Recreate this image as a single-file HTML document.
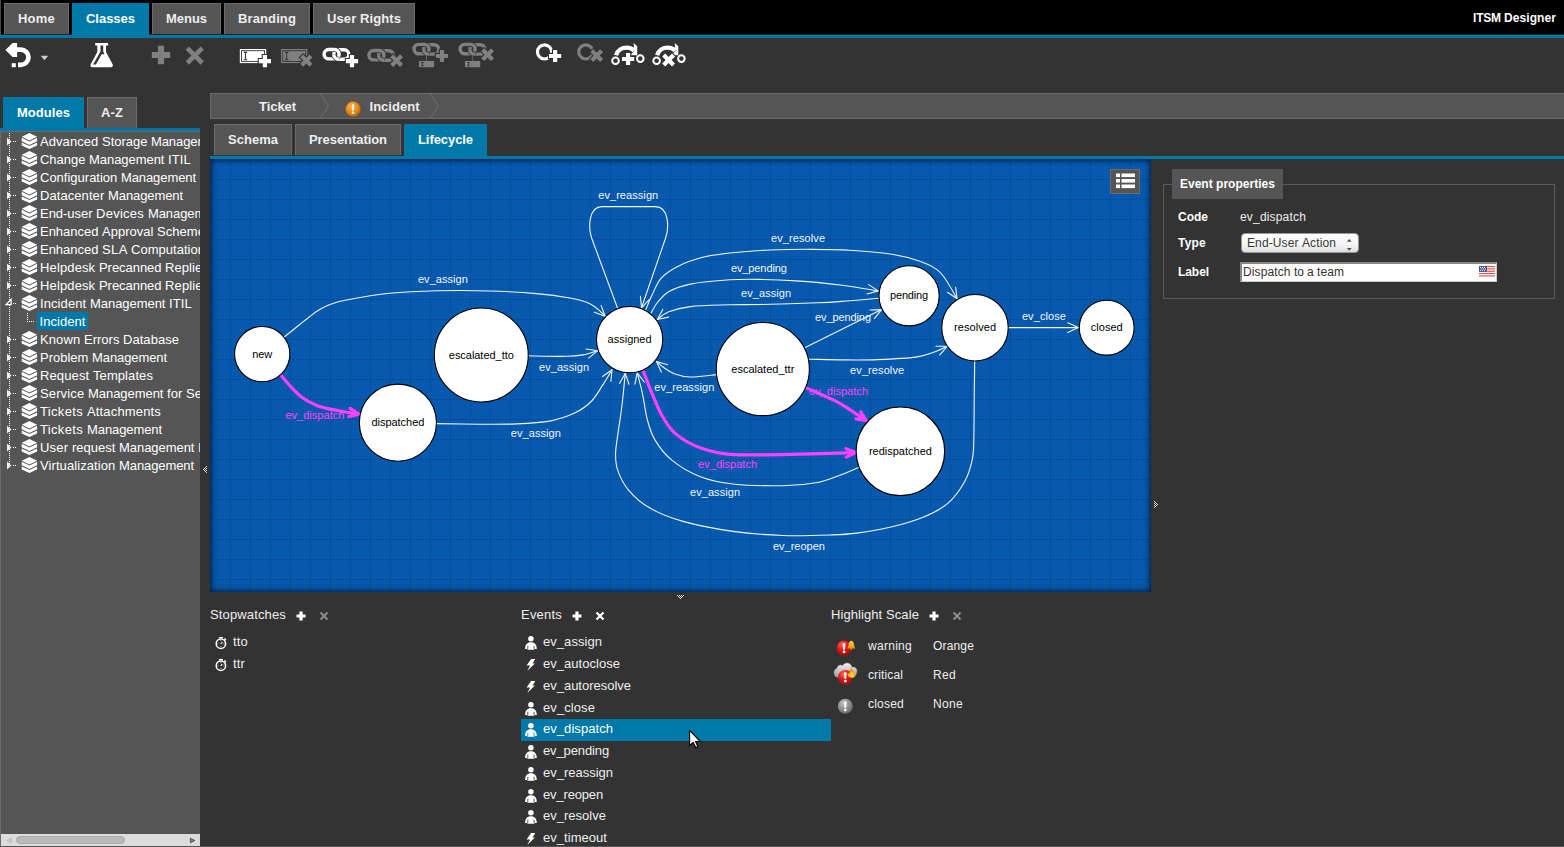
<!DOCTYPE html>
<html lang="en">
<head>
<meta charset="utf-8">
<title>ITSM Designer</title>
<style>
*{box-sizing:border-box}
html,body{margin:0;padding:0}
body{width:1564px;height:847px;overflow:hidden;background:#333;color:#fff;font-family:"Liberation Sans",Arial,Helvetica,sans-serif;font-size:13px;position:relative}
.abs{position:absolute}
#topbar{position:absolute;left:0;top:0;width:1564px;height:35px;background:#000}
#topline{position:absolute;left:0;top:35px;width:1564px;height:3px;background:#0079a8}
.tab{position:absolute;height:31px;top:3px;background:#555;border:1px solid #6b6b6b;border-bottom:0;color:#eee;font-weight:bold;font-size:13px;line-height:29px;text-align:center;white-space:nowrap}
.tab.on{background:#0079a8;border-color:#0079a8;color:#fff;height:32px}
#appname{position:absolute;right:8px;top:3px;height:31px;line-height:30px;font-weight:bold;font-size:12px;color:#fff;white-space:nowrap}
#edge{position:absolute;left:0;top:0;width:1px;height:35px;background:#4a4a4a}
/* left */
#lefttabsline{position:absolute;left:0;top:128px;width:200px;height:3px;background:#0079a8}
#tree{position:absolute;left:0;top:131px;width:200px;height:716px;background:#555;border:1px solid #6b6b6b;border-right:0;overflow:hidden}
.trow{position:absolute;left:0;height:18px;width:300px;white-space:nowrap;font-size:13px;line-height:18px;color:#fff}
.trow .lbl{position:absolute;left:39px;top:0}
.trow svg{position:absolute}
#hscroll{position:absolute;left:0;bottom:0;width:199px;height:12px;background:#dcdcdc}
#hthumb{position:absolute;left:15px;top:2px;width:109px;height:8px;border-radius:4px;background:#b9b9b9;border:1px solid #aaa}
/* main */
#crumbs{position:absolute;left:210px;top:93px;width:1354px;height:26px;background:#555;border:1px solid #6b6b6b;border-right:0}
.crumb{position:absolute;top:0;height:24px;line-height:24px;font-weight:bold;font-size:13px;color:#eee;white-space:nowrap}
#subline{position:absolute;left:210px;top:156px;width:1354px;height:3px;background:#0079a8}
.stab{position:absolute;top:124px;height:31px;background:#555;border:1px solid #6b6b6b;border-bottom:0;color:#eee;font-weight:bold;font-size:13px;line-height:29px;text-align:center;white-space:nowrap}
.stab.on{background:#0079a8;border-color:#0079a8;color:#fff;height:32px}
#canvas{position:absolute;left:210px;top:159px;width:941px;height:433px;background:#0659ae repeating-linear-gradient(to bottom,rgba(255,255,255,.012) 0,rgba(255,255,255,.012) 1px,rgba(0,0,30,.02) 1px,rgba(0,0,30,.02) 2px);overflow:hidden}
#canvas svg{position:absolute;left:0;top:0}
#cshadow{position:absolute;left:0;top:0;width:941px;height:433px;box-shadow:inset 0 0 6px 1px rgba(0,10,40,.85);pointer-events:none}
#listbtn{position:absolute;left:900px;top:10px;width:30px;height:25px;background:#555;border:1px solid #6b6b6b}
/* right */
#fs{position:absolute;left:1163px;top:184px;width:392px;height:115px;border:1px solid #5c5c5c}
#legend{position:absolute;left:1172px;top:169px;width:111px;height:30px;background:#555;font-weight:bold;font-size:12px;line-height:31px;padding-left:8px;white-space:nowrap}
.plabel{position:absolute;left:1178px;font-weight:bold;font-size:12px;line-height:14px;white-space:nowrap}
.pval{position:absolute;left:1240px;font-size:12px;line-height:14px;white-space:nowrap;color:#eee}
#sel{position:absolute;left:1241px;top:233px;width:118px;height:20px;border:1px solid #999;border-radius:4px;background:linear-gradient(#fefefe,#f4f4f4 60%,#dedede);color:#383838;font-size:12px;line-height:18px;padding-left:5px;white-space:nowrap}
#inp{position:absolute;left:1240px;top:262px;width:257px;height:20px;background:#fff;border:2px solid #888;border-right:1px solid #ccc;border-bottom:1px solid #ccc;color:#3a3030;font-size:12px;line-height:17px;padding-left:1px;white-space:nowrap}
/* bottom */
.ltitle{position:absolute;top:607px;font-size:13px;line-height:16px;color:#eee;white-space:nowrap}
.lrow{position:absolute;height:22px;font-size:13px;line-height:20px;color:#eee;white-space:nowrap}
.lrow.on{background:#0079a8;color:#fff}
.lrow>span{position:absolute;left:22px;top:0}
.lrow svg{position:absolute}
.hrow{position:absolute;font-size:12px;line-height:14px;color:#eee;white-space:nowrap}
svg{overflow:visible}
</style>
</head>
<body>
<div id="topbar"></div><div class="abs" style="left:0;top:34px;width:1564px;height:1px;background:#2b2422"></div><div id="topline"></div><div id="edge"></div>
<div class="tab" style="left:4px;width:65px"><span style="letter-spacing:0.219px">Home</span></div>
<div class="tab on" style="left:72px;width:77px"><span style="letter-spacing:-0.022px">Classes</span></div>
<div class="tab" style="left:152px;width:69px"><span style="letter-spacing:-0.034px">Menus</span></div>
<div class="tab" style="left:224px;width:86px"><span style="letter-spacing:0.117px">Branding</span></div>
<div class="tab" style="left:313px;width:102px"><span style="letter-spacing:0.094px">User </span><span style="letter-spacing:0.091px">Rights</span></div>
<div id="appname"><span style="letter-spacing:-0.200px">ITSM </span><span style="letter-spacing:0.080px">Designer</span></div>
<svg class="abs" width="720" height="93" style="left:0;top:0" viewBox="0 0 720 93"><path d="M16.6 49.6H20.9A7.6 7.6 0 0 1 20.9 64.8H18" fill="none" stroke="#fff" stroke-width="4.7"/><path d="M5.4 50L12.6 42.9H17.1V57.1H12.6Z" fill="#fff"/><rect x="11.7" y="63.2" width="4.1" height="4" fill="#fff"/><path d="M40.7 55.8H48.2L44.45 60.2Z" fill="#ccc"/><path d="M95.2 42.9H108.1V45.4H106V52L112.6 64.2Q113.6 67.2 110.8 67.2H92.5Q89.7 67.2 90.7 64.2L97.3 52V45.4H95.2Z" fill="#fff"/><path d="M100.5 45.4H103.2V51.6L104.6 54.2H101.6L96 64.6H93.1L100.5 51.4Z" fill="#333"/><path d="M157.90 45.80H164.10V51.90H170.20V58.10H164.10V64.20H157.90V58.10H151.80V51.90H157.90Z" fill="#808080"/><path d="M187.3 48.1L202.2 63M202.2 48.1L187.3 63" stroke="#808080" stroke-width="4.6" fill="none"/><rect x="239.8" y="49" width="26.4" height="14.1" fill="#fff"/><rect x="241.5" y="50.7" width="23" height="10.7" fill="none" stroke="#333" stroke-width="0.9"/><path d="M243.80 52.40h3.4M243.80 59.80h3.4M245.50 52.40v7.4" stroke="#333" stroke-width="1.1" fill="none"/><path d="M262.80 55.00H267.00V59.00H271.00V63.20H267.00V67.20H262.80V63.20H258.80V59.00H262.80Z" fill="#333" stroke="#333" stroke-width="2.2" stroke-linejoin="miter"/><path d="M262.80 55.00H267.00V59.00H271.00V63.20H267.00V67.20H262.80V63.20H258.80V59.00H262.80Z" fill="#fff"/><rect x="281" y="49" width="26.4" height="14.1" fill="#808080"/><rect x="282.7" y="50.7" width="23" height="10.7" fill="none" stroke="#333" stroke-width="0.9"/><path d="M285.00 52.40h3.4M285.00 59.80h3.4M286.70 52.40v7.4" stroke="#333" stroke-width="1.1" fill="none"/><path d="M-2.10 -6.61H2.10V-2.10H6.61V2.10H2.10V6.61H-2.10V2.10H-6.61V-2.10H-2.10Z" transform="translate(306.30 60.60) rotate(45)" fill="#333" stroke="#333" stroke-width="2.2"/><path d="M-2.10 -6.61H2.10V-2.10H6.61V2.10H2.10V6.61H-2.10V2.10H-6.61V-2.10H-2.10Z" transform="translate(306.30 60.60) rotate(45)" fill="#808080"/><rect x="333.80" y="49.80" width="15" height="9.4" rx="4.7" fill="none" stroke="#fff" stroke-width="3.4"/><rect x="324.10" y="49.50" width="15" height="9.4" rx="4.7" fill="none" stroke="#333" stroke-width="5.0"/><rect x="324.10" y="49.50" width="15" height="9.4" rx="4.7" fill="none" stroke="#fff" stroke-width="3.4"/><clipPath id="ck1"><rect x="330.40" y="54.80" width="9" height="8"/></clipPath><g clip-path="url(#ck1)"><rect x="333.80" y="49.80" width="15" height="9.4" rx="4.7" fill="none" stroke="#333" stroke-width="5.0"/><rect x="333.80" y="49.80" width="15" height="9.4" rx="4.7" fill="none" stroke="#fff" stroke-width="3.4"/></g><path d="M349.90 55.00H354.10V59.00H358.10V63.20H354.10V67.20H349.90V63.20H345.90V59.00H349.90Z" fill="#333" stroke="#333" stroke-width="2.2" stroke-linejoin="miter"/><path d="M349.90 55.00H354.10V59.00H358.10V63.20H354.10V67.20H349.90V63.20H345.90V59.00H349.90Z" fill="#fff"/><rect x="378.60" y="50.80" width="15" height="9.4" rx="4.7" fill="none" stroke="#808080" stroke-width="3.4"/><rect x="368.90" y="50.50" width="15" height="9.4" rx="4.7" fill="none" stroke="#333" stroke-width="5.0"/><rect x="368.90" y="50.50" width="15" height="9.4" rx="4.7" fill="none" stroke="#808080" stroke-width="3.4"/><clipPath id="ck2"><rect x="375.20" y="55.80" width="9" height="8"/></clipPath><g clip-path="url(#ck2)"><rect x="378.60" y="50.80" width="15" height="9.4" rx="4.7" fill="none" stroke="#333" stroke-width="5.0"/><rect x="378.60" y="50.80" width="15" height="9.4" rx="4.7" fill="none" stroke="#808080" stroke-width="3.4"/></g><path d="M-2.10 -6.96H2.10V-2.10H6.96V2.10H2.10V6.96H-2.10V2.10H-6.96V-2.10H-2.10Z" transform="translate(396.60 60.60) rotate(45)" fill="#333" stroke="#333" stroke-width="2.2"/><path d="M-2.10 -6.96H2.10V-2.10H6.96V2.10H2.10V6.96H-2.10V2.10H-6.96V-2.10H-2.10Z" transform="translate(396.60 60.60) rotate(45)" fill="#808080"/><rect x="423.70" y="44.70" width="15" height="9.4" rx="4.7" fill="none" stroke="#808080" stroke-width="3.4"/><rect x="414.00" y="44.40" width="15" height="9.4" rx="4.7" fill="none" stroke="#333" stroke-width="5.0"/><rect x="414.00" y="44.40" width="15" height="9.4" rx="4.7" fill="none" stroke="#808080" stroke-width="3.4"/><clipPath id="ck3"><rect x="420.30" y="49.70" width="9" height="8"/></clipPath><g clip-path="url(#ck3)"><rect x="423.70" y="44.70" width="15" height="9.4" rx="4.7" fill="none" stroke="#333" stroke-width="5.0"/><rect x="423.70" y="44.70" width="15" height="9.4" rx="4.7" fill="none" stroke="#808080" stroke-width="3.4"/></g><path d="M439.90 49.90H444.10V53.90H448.10V58.10H444.10V62.10H439.90V58.10H435.90V53.90H439.90Z" fill="#333" stroke="#333" stroke-width="2.2" stroke-linejoin="miter"/><path d="M439.90 49.90H444.10V53.90H448.10V58.10H444.10V62.10H439.90V58.10H435.90V53.90H439.90Z" fill="#808080"/><path d="M426.5 56.5V61" stroke="#808080" stroke-width="1" stroke-dasharray="1.5 1" fill="none"/><rect x="418.9" y="61" width="15.2" height="6.2" fill="#808080"/><path d="M421.00 62.50h2.8M421.00 65.70h2.8M422.40 62.50v3.2" stroke="#333" stroke-width="0.9" fill="none"/><rect x="469.80" y="44.70" width="15" height="9.4" rx="4.7" fill="none" stroke="#808080" stroke-width="3.4"/><rect x="460.10" y="44.40" width="15" height="9.4" rx="4.7" fill="none" stroke="#333" stroke-width="5.0"/><rect x="460.10" y="44.40" width="15" height="9.4" rx="4.7" fill="none" stroke="#808080" stroke-width="3.4"/><clipPath id="ck4"><rect x="466.40" y="49.70" width="9" height="8"/></clipPath><g clip-path="url(#ck4)"><rect x="469.80" y="44.70" width="15" height="9.4" rx="4.7" fill="none" stroke="#333" stroke-width="5.0"/><rect x="469.80" y="44.70" width="15" height="9.4" rx="4.7" fill="none" stroke="#808080" stroke-width="3.4"/></g><path d="M-2.10 -6.96H2.10V-2.10H6.96V2.10H2.10V6.96H-2.10V2.10H-6.96V-2.10H-2.10Z" transform="translate(487.60 54.70) rotate(45)" fill="#333" stroke="#333" stroke-width="2.2"/><path d="M-2.10 -6.96H2.10V-2.10H6.96V2.10H2.10V6.96H-2.10V2.10H-6.96V-2.10H-2.10Z" transform="translate(487.60 54.70) rotate(45)" fill="#808080"/><path d="M472.6 56.5V61" stroke="#808080" stroke-width="1" stroke-dasharray="1.5 1" fill="none"/><rect x="465" y="61" width="15.2" height="6.2" fill="#808080"/><path d="M467.10 62.50h2.8M467.10 65.70h2.8M468.50 62.50v3.2" stroke="#333" stroke-width="0.9" fill="none"/><circle cx="544.5" cy="51.9" r="7.05" fill="none" stroke="#fff" stroke-width="3.1"/><path d="M553.00 49.90H557.20V53.90H561.20V58.10H557.20V62.10H553.00V58.10H549.00V53.90H553.00Z" fill="#333" stroke="#333" stroke-width="2.2" stroke-linejoin="miter"/><path d="M553.00 49.90H557.20V53.90H561.20V58.10H557.20V62.10H553.00V58.10H549.00V53.90H553.00Z" fill="#fff"/><circle cx="585.8" cy="51.9" r="7.05" fill="none" stroke="#808080" stroke-width="3.1"/><path d="M-2.10 -6.96H2.10V-2.10H6.96V2.10H2.10V6.96H-2.10V2.10H-6.96V-2.10H-2.10Z" transform="translate(596.70 55.60) rotate(45)" fill="#333" stroke="#333" stroke-width="2.2"/><path d="M-2.10 -6.96H2.10V-2.10H6.96V2.10H2.10V6.96H-2.10V2.10H-6.96V-2.10H-2.10Z" transform="translate(596.70 55.60) rotate(45)" fill="#808080"/><path d="M616.10 55.2 C617.40 50.2 622.20 47.6 626.70 47.6 C629.70 47.6 632.20 48.6 634.20 50.6" fill="none" stroke="#fff" stroke-width="4.4"/><path d="M633.60 43 L637.20 46.2 V55.2 H630.00 L634.40 51 Z" fill="#fff"/><circle cx="615.50" cy="60.8" r="3.3" fill="none" stroke="#fff" stroke-width="2"/><circle cx="640.30" cy="58.6" r="3.3" fill="none" stroke="#fff" stroke-width="2"/><path d="M626.00 52.90H630.20V56.90H634.20V61.10H630.20V65.10H626.00V61.10H622.00V56.90H626.00Z" fill="#333" stroke="#333" stroke-width="2.2" stroke-linejoin="miter"/><path d="M626.00 52.90H630.20V56.90H634.20V61.10H630.20V65.10H626.00V61.10H622.00V56.90H626.00Z" fill="#fff"/><path d="M657.20 55.2 C658.50 50.2 663.30 47.6 667.80 47.6 C670.80 47.6 673.30 48.6 675.30 50.6" fill="none" stroke="#fff" stroke-width="4.4"/><path d="M674.70 43 L678.30 46.2 V55.2 H671.10 L675.50 51 Z" fill="#fff"/><circle cx="656.60" cy="60.8" r="3.3" fill="none" stroke="#fff" stroke-width="2"/><circle cx="681.40" cy="58.6" r="3.3" fill="none" stroke="#fff" stroke-width="2"/><path d="M-2.10 -6.96H2.10V-2.10H6.96V2.10H2.10V6.96H-2.10V2.10H-6.96V-2.10H-2.10Z" transform="translate(668.60 60.00) rotate(45)" fill="#333" stroke="#333" stroke-width="2.2"/><path d="M-2.10 -6.96H2.10V-2.10H6.96V2.10H2.10V6.96H-2.10V2.10H-6.96V-2.10H-2.10Z" transform="translate(668.60 60.00) rotate(45)" fill="#fff"/></svg>
<div class="tab on" style="left:3px;top:97px;width:81px;height:32px;line-height:30px"><span style="letter-spacing:0.038px">Modules</span></div>
<div class="tab" style="left:87px;top:97px;width:50px;height:31px;line-height:30px"><span style="letter-spacing:0.109px">A-Z</span></div>
<div id="lefttabsline"></div>
<div id="tree"><svg width="200" height="716" style="position:absolute;left:0;top:0"><g stroke="#fff" stroke-width="1" fill="none" shape-rendering="crispEdges"><path d="M8.5 1 V334" stroke-dasharray="1 1"/><path d="M26.5 181 V190" stroke-dasharray="1 1"/><path d="M28 189.5 H33" stroke-dasharray="1 1"/><path d="M12 9.5 H15" stroke-dasharray="1 1"/><path d="M12 27.5 H15" stroke-dasharray="1 1"/><path d="M12 45.5 H15" stroke-dasharray="1 1"/><path d="M12 63.5 H15" stroke-dasharray="1 1"/><path d="M12 81.5 H15" stroke-dasharray="1 1"/><path d="M12 99.5 H15" stroke-dasharray="1 1"/><path d="M12 117.5 H15" stroke-dasharray="1 1"/><path d="M12 135.5 H15" stroke-dasharray="1 1"/><path d="M12 153.5 H15" stroke-dasharray="1 1"/><path d="M12 171.5 H15" stroke-dasharray="1 1"/><path d="M12 207.5 H15" stroke-dasharray="1 1"/><path d="M12 225.5 H15" stroke-dasharray="1 1"/><path d="M12 243.5 H15" stroke-dasharray="1 1"/><path d="M12 261.5 H15" stroke-dasharray="1 1"/><path d="M12 279.5 H15" stroke-dasharray="1 1"/><path d="M12 297.5 H15" stroke-dasharray="1 1"/><path d="M12 315.5 H15" stroke-dasharray="1 1"/><path d="M12 333.5 H15" stroke-dasharray="1 1"/></g><g fill="#eee"><path d="M6 5.5 L10.5 9.5 L6 13.5 Z"/><path d="M6 23.5 L10.5 27.5 L6 31.5 Z"/><path d="M6 41.5 L10.5 45.5 L6 49.5 Z"/><path d="M6 59.5 L10.5 63.5 L6 67.5 Z"/><path d="M6 77.5 L10.5 81.5 L6 85.5 Z"/><path d="M6 95.5 L10.5 99.5 L6 103.5 Z"/><path d="M6 113.5 L10.5 117.5 L6 121.5 Z"/><path d="M6 131.5 L10.5 135.5 L6 139.5 Z"/><path d="M6 149.5 L10.5 153.5 L6 157.5 Z"/><path d="M6 203.5 L10.5 207.5 L6 211.5 Z"/><path d="M6 221.5 L10.5 225.5 L6 229.5 Z"/><path d="M6 239.5 L10.5 243.5 L6 247.5 Z"/><path d="M6 257.5 L10.5 261.5 L6 265.5 Z"/><path d="M6 275.5 L10.5 279.5 L6 283.5 Z"/><path d="M6 293.5 L10.5 297.5 L6 301.5 Z"/><path d="M6 311.5 L10.5 315.5 L6 319.5 Z"/><path d="M6 329.5 L10.5 333.5 L6 337.5 Z"/></g><path d="M5 172.6 L10.1 167.4 V172.6 Z" fill="#555" stroke="#fff" stroke-width="1.3"/></svg><div class="trow" style="top:1px"><svg width="17" height="18" viewBox="0 0 17 18" style="left:20px;top:-1px"><g fill="#fff"><path d="M8.4 1 L16.1 4.7 L8.4 8.4 L0.7 4.7 Z"/><path d="M0.7 5.8 L8.4 9.5 L16.1 5.8 V9.3 L8.4 13 L0.7 9.3 Z"/><path d="M0.7 10.4 L8.4 14.1 L16.1 10.4 V13.4 L8.4 17.1 L0.7 13.4 Z"/></g></svg><span class="lbl"><span style="letter-spacing:0.062px">Advanced </span><span style="letter-spacing:-0.020px">Storage </span><span style="letter-spacing:-0.089px">Management</span></span></div><div class="trow" style="top:19px"><svg width="17" height="18" viewBox="0 0 17 18" style="left:20px;top:-1px"><g fill="#fff"><path d="M8.4 1 L16.1 4.7 L8.4 8.4 L0.7 4.7 Z"/><path d="M0.7 5.8 L8.4 9.5 L16.1 5.8 V9.3 L8.4 13 L0.7 9.3 Z"/><path d="M0.7 10.4 L8.4 14.1 L16.1 10.4 V13.4 L8.4 17.1 L0.7 13.4 Z"/></g></svg><span class="lbl"><span style="letter-spacing:-0.022px">Change </span><span style="letter-spacing:-0.045px">Management </span><span style="letter-spacing:0.148px">ITIL</span></span></div><div class="trow" style="top:37px"><svg width="17" height="18" viewBox="0 0 17 18" style="left:20px;top:-1px"><g fill="#fff"><path d="M8.4 1 L16.1 4.7 L8.4 8.4 L0.7 4.7 Z"/><path d="M0.7 5.8 L8.4 9.5 L16.1 5.8 V9.3 L8.4 13 L0.7 9.3 Z"/><path d="M0.7 10.4 L8.4 14.1 L16.1 10.4 V13.4 L8.4 17.1 L0.7 13.4 Z"/></g></svg><span class="lbl">Configuration <span style="letter-spacing:-0.089px">Management</span></span></div><div class="trow" style="top:55px"><svg width="17" height="18" viewBox="0 0 17 18" style="left:20px;top:-1px"><g fill="#fff"><path d="M8.4 1 L16.1 4.7 L8.4 8.4 L0.7 4.7 Z"/><path d="M0.7 5.8 L8.4 9.5 L16.1 5.8 V9.3 L8.4 13 L0.7 9.3 Z"/><path d="M0.7 10.4 L8.4 14.1 L16.1 10.4 V13.4 L8.4 17.1 L0.7 13.4 Z"/></g></svg><span class="lbl"><span style="letter-spacing:0.072px">Datacenter </span><span style="letter-spacing:-0.089px">Management</span></span></div><div class="trow" style="top:73px"><svg width="17" height="18" viewBox="0 0 17 18" style="left:20px;top:-1px"><g fill="#fff"><path d="M8.4 1 L16.1 4.7 L8.4 8.4 L0.7 4.7 Z"/><path d="M0.7 5.8 L8.4 9.5 L16.1 5.8 V9.3 L8.4 13 L0.7 9.3 Z"/><path d="M0.7 10.4 L8.4 14.1 L16.1 10.4 V13.4 L8.4 17.1 L0.7 13.4 Z"/></g></svg><span class="lbl"><span style="letter-spacing:-0.042px">End-user </span><span style="letter-spacing:0.268px">Devices </span><span style="letter-spacing:-0.089px">Management</span></span></div><div class="trow" style="top:91px"><svg width="17" height="18" viewBox="0 0 17 18" style="left:20px;top:-1px"><g fill="#fff"><path d="M8.4 1 L16.1 4.7 L8.4 8.4 L0.7 4.7 Z"/><path d="M0.7 5.8 L8.4 9.5 L16.1 5.8 V9.3 L8.4 13 L0.7 9.3 Z"/><path d="M0.7 10.4 L8.4 14.1 L16.1 10.4 V13.4 L8.4 17.1 L0.7 13.4 Z"/></g></svg><span class="lbl"><span style="letter-spacing:-0.019px">Enhanced </span><span style="letter-spacing:0.009px">Approval </span><span style="letter-spacing:0.049px">Scheme</span></span></div><div class="trow" style="top:109px"><svg width="17" height="18" viewBox="0 0 17 18" style="left:20px;top:-1px"><g fill="#fff"><path d="M8.4 1 L16.1 4.7 L8.4 8.4 L0.7 4.7 Z"/><path d="M0.7 5.8 L8.4 9.5 L16.1 5.8 V9.3 L8.4 13 L0.7 9.3 Z"/><path d="M0.7 10.4 L8.4 14.1 L16.1 10.4 V13.4 L8.4 17.1 L0.7 13.4 Z"/></g></svg><span class="lbl"><span style="letter-spacing:-0.019px">Enhanced </span><span style="letter-spacing:0.383px">SLA </span><span style="letter-spacing:0.026px">Computation</span></span></div><div class="trow" style="top:127px"><svg width="17" height="18" viewBox="0 0 17 18" style="left:20px;top:-1px"><g fill="#fff"><path d="M8.4 1 L16.1 4.7 L8.4 8.4 L0.7 4.7 Z"/><path d="M0.7 5.8 L8.4 9.5 L16.1 5.8 V9.3 L8.4 13 L0.7 9.3 Z"/><path d="M0.7 10.4 L8.4 14.1 L16.1 10.4 V13.4 L8.4 17.1 L0.7 13.4 Z"/></g></svg><span class="lbl"><span style="letter-spacing:0.132px">Helpdesk </span><span style="letter-spacing:-0.050px">Precanned </span><span style="letter-spacing:0.092px">Replies</span></span></div><div class="trow" style="top:145px"><svg width="17" height="18" viewBox="0 0 17 18" style="left:20px;top:-1px"><g fill="#fff"><path d="M8.4 1 L16.1 4.7 L8.4 8.4 L0.7 4.7 Z"/><path d="M0.7 5.8 L8.4 9.5 L16.1 5.8 V9.3 L8.4 13 L0.7 9.3 Z"/><path d="M0.7 10.4 L8.4 14.1 L16.1 10.4 V13.4 L8.4 17.1 L0.7 13.4 Z"/></g></svg><span class="lbl"><span style="letter-spacing:0.132px">Helpdesk </span><span style="letter-spacing:-0.050px">Precanned </span><span style="letter-spacing:0.129px">Replies </span><span style="letter-spacing:-0.078px">Pro</span></span></div><div class="trow" style="top:163px"><svg width="17" height="18" viewBox="0 0 17 18" style="left:20px;top:-1px"><g fill="#fff"><path d="M8.4 1 L16.1 4.7 L8.4 8.4 L0.7 4.7 Z"/><path d="M0.7 5.8 L8.4 9.5 L16.1 5.8 V9.3 L8.4 13 L0.7 9.3 Z"/><path d="M0.7 10.4 L8.4 14.1 L16.1 10.4 V13.4 L8.4 17.1 L0.7 13.4 Z"/></g></svg><span class="lbl"><span style="letter-spacing:0.094px">Incident </span><span style="letter-spacing:-0.045px">Management </span><span style="letter-spacing:0.148px">ITIL</span></span></div><div class="trow" style="top:181px"><span class="lbl" style="left:36px;top:-1px;height:18px;line-height:20px;padding:0 2.2px 0 2.5px;background:#0079a8"><span style="letter-spacing:0.057px">Incident</span></span></div><div class="trow" style="top:199px"><svg width="17" height="18" viewBox="0 0 17 18" style="left:20px;top:-1px"><g fill="#fff"><path d="M8.4 1 L16.1 4.7 L8.4 8.4 L0.7 4.7 Z"/><path d="M0.7 5.8 L8.4 9.5 L16.1 5.8 V9.3 L8.4 13 L0.7 9.3 Z"/><path d="M0.7 10.4 L8.4 14.1 L16.1 10.4 V13.4 L8.4 17.1 L0.7 13.4 Z"/></g></svg><span class="lbl"><span style="letter-spacing:0.104px">Known </span>Errors <span style="letter-spacing:0.043px">Database</span></span></div><div class="trow" style="top:217px"><svg width="17" height="18" viewBox="0 0 17 18" style="left:20px;top:-1px"><g fill="#fff"><path d="M8.4 1 L16.1 4.7 L8.4 8.4 L0.7 4.7 Z"/><path d="M0.7 5.8 L8.4 9.5 L16.1 5.8 V9.3 L8.4 13 L0.7 9.3 Z"/><path d="M0.7 10.4 L8.4 14.1 L16.1 10.4 V13.4 L8.4 17.1 L0.7 13.4 Z"/></g></svg><span class="lbl">Problem <span style="letter-spacing:-0.089px">Management</span></span></div><div class="trow" style="top:235px"><svg width="17" height="18" viewBox="0 0 17 18" style="left:20px;top:-1px"><g fill="#fff"><path d="M8.4 1 L16.1 4.7 L8.4 8.4 L0.7 4.7 Z"/><path d="M0.7 5.8 L8.4 9.5 L16.1 5.8 V9.3 L8.4 13 L0.7 9.3 Z"/><path d="M0.7 10.4 L8.4 14.1 L16.1 10.4 V13.4 L8.4 17.1 L0.7 13.4 Z"/></g></svg><span class="lbl"><span style="letter-spacing:0.119px">Request </span><span style="letter-spacing:0.083px">Templates</span></span></div><div class="trow" style="top:253px"><svg width="17" height="18" viewBox="0 0 17 18" style="left:20px;top:-1px"><g fill="#fff"><path d="M8.4 1 L16.1 4.7 L8.4 8.4 L0.7 4.7 Z"/><path d="M0.7 5.8 L8.4 9.5 L16.1 5.8 V9.3 L8.4 13 L0.7 9.3 Z"/><path d="M0.7 10.4 L8.4 14.1 L16.1 10.4 V13.4 L8.4 17.1 L0.7 13.4 Z"/></g></svg><span class="lbl"><span style="letter-spacing:0.129px">Service </span><span style="letter-spacing:-0.045px">Management </span><span style="letter-spacing:0.051px">for </span><span style="letter-spacing:0.129px">Service </span><span style="letter-spacing:0.009px">Providers</span></span></div><div class="trow" style="top:271px"><svg width="17" height="18" viewBox="0 0 17 18" style="left:20px;top:-1px"><g fill="#fff"><path d="M8.4 1 L16.1 4.7 L8.4 8.4 L0.7 4.7 Z"/><path d="M0.7 5.8 L8.4 9.5 L16.1 5.8 V9.3 L8.4 13 L0.7 9.3 Z"/><path d="M0.7 10.4 L8.4 14.1 L16.1 10.4 V13.4 L8.4 17.1 L0.7 13.4 Z"/></g></svg><span class="lbl"><span style="letter-spacing:0.336px">Tickets </span><span style="letter-spacing:0.158px">Attachments</span></span></div><div class="trow" style="top:289px"><svg width="17" height="18" viewBox="0 0 17 18" style="left:20px;top:-1px"><g fill="#fff"><path d="M8.4 1 L16.1 4.7 L8.4 8.4 L0.7 4.7 Z"/><path d="M0.7 5.8 L8.4 9.5 L16.1 5.8 V9.3 L8.4 13 L0.7 9.3 Z"/><path d="M0.7 10.4 L8.4 14.1 L16.1 10.4 V13.4 L8.4 17.1 L0.7 13.4 Z"/></g></svg><span class="lbl"><span style="letter-spacing:0.336px">Tickets </span><span style="letter-spacing:-0.089px">Management</span></span></div><div class="trow" style="top:307px"><svg width="17" height="18" viewBox="0 0 17 18" style="left:20px;top:-1px"><g fill="#fff"><path d="M8.4 1 L16.1 4.7 L8.4 8.4 L0.7 4.7 Z"/><path d="M0.7 5.8 L8.4 9.5 L16.1 5.8 V9.3 L8.4 13 L0.7 9.3 Z"/><path d="M0.7 10.4 L8.4 14.1 L16.1 10.4 V13.4 L8.4 17.1 L0.7 13.4 Z"/></g></svg><span class="lbl"><span style="letter-spacing:0.188px">User </span>request <span style="letter-spacing:-0.045px">Management </span><span style="letter-spacing:0.148px">ITIL</span></span></div><div class="trow" style="top:325px"><svg width="17" height="18" viewBox="0 0 17 18" style="left:20px;top:-1px"><g fill="#fff"><path d="M8.4 1 L16.1 4.7 L8.4 8.4 L0.7 4.7 Z"/><path d="M0.7 5.8 L8.4 9.5 L16.1 5.8 V9.3 L8.4 13 L0.7 9.3 Z"/><path d="M0.7 10.4 L8.4 14.1 L16.1 10.4 V13.4 L8.4 17.1 L0.7 13.4 Z"/></g></svg><span class="lbl"><span style="letter-spacing:0.079px">Virtualization </span><span style="letter-spacing:-0.089px">Management</span></span></div><div id="hscroll"><div id="hthumb"></div><svg width="199" height="12" style="left:0;top:0"><path d="M10.4 4.3 L6 6.5 L10.4 8.7 Z" fill="#cfcfcf" stroke="#b4b4b4" stroke-width=".8"/><path d="M189.4 4.3 L193.8 6.5 L189.4 8.7 Z" fill="#8a8a8a" stroke="#4c4c4c" stroke-width=".9"/></svg></div></div>
<svg class="abs" width="4" height="7" style="left:203px;top:466px" shape-rendering="crispEdges"><g fill="#d8d8d8"><rect x="3" y="0" width="1" height="1"/><rect x="3" y="2" width="1" height="1"/><rect x="3" y="4" width="1" height="1"/><rect x="3" y="6" width="1" height="1"/><rect x="2" y="1" width="1" height="1"/><rect x="2" y="3" width="1" height="1"/><rect x="2" y="5" width="1" height="1"/><rect x="1" y="2" width="1" height="1"/><rect x="1" y="4" width="1" height="1"/><rect x="0" y="3" width="1" height="1"/></g></svg>
<svg class="abs" width="4" height="7" style="left:1154px;top:501px" shape-rendering="crispEdges"><g fill="#d8d8d8"><rect x="0" y="0" width="1" height="1"/><rect x="0" y="2" width="1" height="1"/><rect x="0" y="4" width="1" height="1"/><rect x="0" y="6" width="1" height="1"/><rect x="1" y="1" width="1" height="1"/><rect x="1" y="3" width="1" height="1"/><rect x="1" y="5" width="1" height="1"/><rect x="2" y="2" width="1" height="1"/><rect x="2" y="4" width="1" height="1"/><rect x="3" y="3" width="1" height="1"/></g></svg>
<svg class="abs" width="7" height="4" style="left:677px;top:595px" shape-rendering="crispEdges"><g fill="#d8d8d8"><rect x="0" y="0" width="1" height="1"/><rect x="2" y="0" width="1" height="1"/><rect x="4" y="0" width="1" height="1"/><rect x="6" y="0" width="1" height="1"/><rect x="1" y="1" width="1" height="1"/><rect x="3" y="1" width="1" height="1"/><rect x="5" y="1" width="1" height="1"/><rect x="2" y="2" width="1" height="1"/><rect x="4" y="2" width="1" height="1"/><rect x="3" y="3" width="1" height="1"/></g></svg>
<div id="crumbs"><div class="crumb" style="left:48px;top:1px"><span style="letter-spacing:-0.057px">Ticket</span></div><svg class="abs" width="12" height="24" style="left:108px;top:0"><path d="M1.5 0 L9.5 12 L1.5 24" fill="none" stroke="#6b6b6b" stroke-width="1.2"/></svg><svg class="abs" width="16" height="16" style="left:134px;top:7.3px"><defs><radialGradient id="og" cx="40%" cy="30%" r="75%"><stop offset="0" stop-color="#f6b04a"/><stop offset=".6" stop-color="#e88a1a"/><stop offset="1" stop-color="#b96205"/></radialGradient></defs><circle cx="8" cy="8" r="7.4" fill="url(#og)" stroke="#b4630c" stroke-width=".6"/><rect x="6.9" y="3.2" width="2.2" height="6.2" rx=".8" fill="#fff"/><circle cx="8" cy="11.7" r="1.3" fill="#fff"/></svg><div class="crumb" style="left:158.5px;top:1px"><span style="letter-spacing:0.020px">Incident</span></div><svg class="abs" width="12" height="24" style="left:218px;top:0"><path d="M1.5 0 L9.5 12 L1.5 24" fill="none" stroke="#6b6b6b" stroke-width="1.2"/></svg></div>
<div class="stab" style="left:214px;width:78px"><span style="letter-spacing:0.021px">Schema</span></div>
<div class="stab" style="left:295px;width:106px"><span style="letter-spacing:-0.062px">Presentation</span></div>
<div class="stab on" style="left:404px;width:83px"><span style="letter-spacing:-0.073px">Lifecycle</span></div>
<div id="subline"></div>
<div id="canvas"><svg width="941" height="433" viewBox="0 0 941 433" font-family="Liberation Sans, Arial, sans-serif" font-size="11"><defs><pattern id="grid" width="20" height="20" patternUnits="userSpaceOnUse"><path d="M0.5 0V20" stroke="#06428c" stroke-width="1" stroke-dasharray="2 1.33" stroke-dashoffset="1"/><path d="M0 0.5H20" stroke="#06428c" stroke-width="1" stroke-dasharray="2 1.33" stroke-dashoffset="1"/></pattern></defs><rect width="941" height="433" fill="url(#grid)" opacity=".78"/><g fill="none" stroke="#f2f6fb" stroke-width="1.1" stroke-linecap="round" stroke-linejoin="round"><path d="M74.5 177.8C77.1 175.7 85.9 168.6 90.0 165.3C94.1 162.0 95.9 160.5 99.0 158.2C102.1 155.8 104.9 153.3 108.4 151.2C111.9 149.1 115.3 147.2 120.0 145.5C124.7 143.8 126.5 142.9 136.4 141.0C146.3 139.1 164.4 135.8 179.6 134.3C194.8 132.8 211.2 132.2 227.8 131.8C244.4 131.4 262.9 131.5 279.4 132.0C295.8 132.5 313.1 133.4 326.5 134.6C339.9 135.8 351.3 137.5 359.8 139.0C368.2 140.5 372.7 141.8 377.2 143.5C381.7 145.2 384.0 147.2 387.0 149.5C390.0 151.8 393.8 155.9 395.1 157.2"/><path d="M384.3 153.2L395.1 157.2L391.1 146.4"/><path d="M435.9 150.5C437.0 147.9 439.9 140.2 442.5 135.0C445.1 129.8 447.0 123.7 451.2 119.1C455.4 114.5 460.9 110.9 467.8 107.4C474.7 103.9 484.1 100.5 492.8 98.3C501.5 96.1 508.8 95.2 520.0 94.0C531.2 92.8 547.2 91.6 560.0 91.0C572.8 90.4 583.7 90.3 597.0 90.3C610.3 90.4 625.6 90.4 640.0 91.3C654.4 92.2 671.7 93.6 683.5 95.5C695.3 97.4 703.5 100.0 710.7 102.5C718.0 105.0 723.0 107.8 727.0 110.6C731.0 113.4 731.6 114.7 735.0 119.5C738.4 124.3 745.1 136.3 747.1 139.7"/><path d="M737.5 133.3L747.1 139.7L745.6 128.3"/><path d="M440.8 154.5C441.9 152.7 444.5 147.1 447.5 143.5C450.5 139.9 453.2 135.8 458.7 132.7C464.2 129.6 470.2 127.1 480.4 125.1C490.6 123.1 508.4 121.6 520.0 120.8C531.6 120.0 539.0 120.2 550.0 120.4C561.0 120.6 572.7 121.0 586.0 121.9C599.3 122.8 616.3 124.3 630.0 126.0C643.7 127.7 661.8 130.9 668.2 131.9"/><path d="M657.1 135.0L668.2 131.9L658.6 125.6"/><path d="M668.7 139.3C663.9 139.7 650.1 140.9 640.0 141.7C629.9 142.4 622.8 143.2 607.8 143.8C592.8 144.4 564.6 145.2 550.0 145.5C535.4 145.8 531.6 145.5 520.0 145.8C508.4 146.2 490.6 146.4 480.4 147.6C470.2 148.8 464.2 150.7 458.7 152.8C453.2 155.0 449.2 159.2 447.3 160.5"/><path d="M452.8 150.4L447.3 160.5L458.6 158.1"/><path d="M317.7 196.8C324.1 196.9 347.0 197.5 356.2 197.3C365.4 197.2 367.7 196.8 372.9 195.9C378.1 195.0 385.1 192.4 387.5 191.7"/><path d="M378.7 199.2L387.5 191.7L376.1 190.0"/><path d="M225.7 264.6C233.1 264.7 256.6 265.1 270.0 265.2C283.4 265.2 294.8 265.4 306.4 264.9C318.0 264.4 329.9 263.9 339.6 262.1C349.3 260.3 357.7 257.4 364.6 254.1C371.5 250.8 376.5 247.2 381.2 242.5C385.9 237.8 389.3 231.2 392.8 225.9C396.3 220.6 400.5 213.3 402.0 210.8"/><path d="M400.9 222.3L402.0 210.8L392.6 217.5"/><path d="M764.7 201.8C764.6 208.3 764.4 227.8 764.2 241.0C764.1 254.2 764.1 271.0 763.8 281.0C763.5 291.0 763.7 294.0 762.2 300.9C760.7 307.8 758.7 315.4 754.7 322.6C750.7 329.8 745.0 338.2 738.1 344.2C731.2 350.1 722.8 354.3 713.1 358.3C703.4 362.3 691.0 365.7 679.9 368.3C668.8 370.9 656.1 372.8 646.6 374.1C637.1 375.4 635.1 375.5 622.8 375.9C610.5 376.3 589.5 377.1 572.9 376.5C556.3 375.9 539.6 374.8 523.0 372.4C506.4 370.0 487.0 366.3 473.1 362.4C459.2 358.5 449.0 354.4 439.9 349.1C430.8 343.8 423.7 337.2 418.3 330.8C412.9 324.4 409.7 317.0 407.6 310.9C405.5 304.8 405.5 300.6 405.6 294.3C405.7 288.0 407.1 281.0 408.2 273.0C409.3 265.0 410.8 256.0 412.0 246.2C413.2 236.4 414.7 219.7 415.2 214.4"/><path d="M419.0 225.3L415.2 214.4L409.5 224.4"/><path d="M649.1 308.2C645.6 309.7 635.2 314.4 628.0 317.0C620.8 319.6 615.3 322.1 606.1 323.7C596.9 325.3 586.8 326.5 572.9 326.7C559.0 326.9 536.9 326.5 523.0 325.0C509.1 323.5 500.0 321.5 489.8 317.5C479.5 313.5 469.0 307.0 461.5 300.9C454.0 294.8 448.9 287.5 444.9 280.9C440.9 274.2 439.4 268.6 437.4 261.0C435.3 253.4 434.3 243.2 432.6 235.3C430.9 227.4 428.1 217.4 427.2 213.8"/><path d="M434.2 223.0L427.2 213.8L424.9 225.1"/><path d="M506.5 215.6C502.1 216.0 487.5 218.2 480.4 218.0C473.3 217.8 468.6 216.3 464.1 214.7C459.6 213.1 456.2 210.2 453.3 208.2C450.4 206.2 447.6 203.4 446.5 202.5"/><path d="M457.6 205.8L446.5 202.5L451.3 213.0"/><path d="M595.2 188.6L671.6 150.6"/><path d="M664.3 159.6L671.6 150.6L660.1 151.0"/><path d="M598.8 200.2C604.8 200.3 623.5 200.8 635.0 200.9C646.5 201.0 656.0 201.1 667.8 200.6C679.6 200.1 696.7 199.3 705.9 198.1C715.1 196.9 717.8 195.3 723.0 193.5C728.2 191.7 735.0 188.2 737.4 187.2"/><path d="M729.8 195.9L737.4 187.2L725.9 187.2"/><path d="M797.7 168.6L868.3 168.6"/><path d="M857.8 173.4L868.3 168.6L857.8 163.8"/><path d="M407.6 149.2L381.6 79.0C378.0 68.0 378.8 47.6 392.0 47.6L445.5 47.6C458.6 47.6 459.4 68.0 455.6 79.0L431.5 148.8"/><path d="M430.4 137.3L431.5 148.8L439.5 140.4"/></g><g fill="none" stroke="#ff40ff" stroke-width="3.2" stroke-linecap="round" stroke-linejoin="round"><path d="M433.2 212.0C434.7 215.9 439.4 228.2 442.4 235.3C445.4 242.5 447.7 248.7 451.1 254.9C454.5 261.1 457.7 267.1 463.0 272.3C468.3 277.5 475.9 282.4 483.1 285.9C490.3 289.4 498.4 291.7 506.4 293.4C514.4 295.1 517.4 295.6 531.3 295.9C545.1 296.2 570.5 295.5 589.5 295.1C608.5 294.7 636.2 293.9 645.6 293.6"/><path d="M636.2 298.1L645.6 293.6L636.0 289.7"/><path d="M596.1 228.9C600.8 231.0 616.8 237.7 624.3 241.4C631.8 245.1 635.7 247.9 641.0 251.3C646.3 254.7 653.7 259.9 656.2 261.6"/><path d="M646.0 259.8L656.2 261.6L650.7 252.8"/><path d="M71.0 216.2C72.7 218.2 77.8 224.5 81.3 228.2C84.8 231.9 87.8 235.4 92.2 238.5C96.5 241.6 101.6 244.5 107.4 246.7C113.2 248.9 120.1 250.1 127.0 251.5C133.9 252.9 145.2 254.5 148.8 255.1"/><path d="M138.7 257.6L148.8 255.1L140.1 249.4"/></g><text x="207.9" y="124.3" textLength="50" lengthAdjust="spacing" fill="#f2f6fb">ev_assign</text><text x="388.2" y="40.1" textLength="60" lengthAdjust="spacing" fill="#f2f6fb">ev_reassign</text><text x="561.0" y="82.7" textLength="54" lengthAdjust="spacing" fill="#f2f6fb">ev_resolve</text><text x="520.9" y="112.6" textLength="56" lengthAdjust="spacing" fill="#f2f6fb">ev_pending</text><text x="531.1" y="137.6" textLength="50" lengthAdjust="spacing" fill="#f2f6fb">ev_assign</text><text x="605.0" y="161.7" textLength="56" lengthAdjust="spacing" fill="#f2f6fb">ev_pending</text><text x="640.1" y="214.9" textLength="54" lengthAdjust="spacing" fill="#f2f6fb">ev_resolve</text><text x="811.9" y="160.6" textLength="44" lengthAdjust="spacing" fill="#f2f6fb">ev_close</text><text x="329.0" y="211.7" textLength="50" lengthAdjust="spacing" fill="#f2f6fb">ev_assign</text><text x="300.8" y="278.3" textLength="50" lengthAdjust="spacing" fill="#f2f6fb">ev_assign</text><text x="444.3" y="231.5" textLength="60" lengthAdjust="spacing" fill="#f2f6fb">ev_reassign</text><text x="75.4" y="259.7" textLength="59" lengthAdjust="spacing" fill="#ff40ff">ev_dispatch</text><text x="599.0" y="235.8" textLength="59" lengthAdjust="spacing" fill="#ff40ff">ev_dispatch</text><text x="488.1" y="308.9" textLength="59" lengthAdjust="spacing" fill="#ff40ff">ev_dispatch</text><text x="480.0" y="337.0" textLength="50" lengthAdjust="spacing" fill="#f2f6fb">ev_assign</text><text x="562.9" y="390.7" textLength="52" lengthAdjust="spacing" fill="#f2f6fb">ev_reopen</text><circle cx="52.2" cy="195.1" r="27.65" fill="#fff" stroke="#000" stroke-width="1.1"/><text x="52.2" y="198.7" text-anchor="middle" textLength="20" lengthAdjust="spacing" fill="#000">new</text><circle cx="187.9" cy="263.7" r="38.55" fill="#fff" stroke="#000" stroke-width="1.1"/><text x="187.9" y="267.3" text-anchor="middle" textLength="53" lengthAdjust="spacing" fill="#000">dispatched</text><circle cx="271.3" cy="196.0" r="46.95" fill="#fff" stroke="#000" stroke-width="1.1"/><text x="271.3" y="199.6" text-anchor="middle" textLength="65" lengthAdjust="spacing" fill="#000">escalated_tto</text><circle cx="419.6" cy="180.6" r="33.15" fill="#fff" stroke="#000" stroke-width="1.1"/><text x="419.6" y="184.2" text-anchor="middle" textLength="44" lengthAdjust="spacing" fill="#000">assigned</text><circle cx="552.8" cy="210.1" r="46.55" fill="#fff" stroke="#000" stroke-width="1.1"/><text x="552.8" y="213.7" text-anchor="middle" textLength="63" lengthAdjust="spacing" fill="#000">escalated_ttr</text><circle cx="699.1" cy="136.8" r="30.10" fill="#fff" stroke="#000" stroke-width="1.1"/><text x="699.1" y="140.4" text-anchor="middle" textLength="38" lengthAdjust="spacing" fill="#000">pending</text><circle cx="765.0" cy="168.7" r="33.25" fill="#fff" stroke="#000" stroke-width="1.1"/><text x="765.0" y="172.3" text-anchor="middle" textLength="42" lengthAdjust="spacing" fill="#000">resolved</text><circle cx="896.7" cy="168.7" r="27.45" fill="#fff" stroke="#000" stroke-width="1.1"/><text x="896.7" y="172.3" text-anchor="middle" textLength="32" lengthAdjust="spacing" fill="#000">closed</text><circle cx="690.4" cy="292.3" r="44.25" fill="#fff" stroke="#000" stroke-width="1.1"/><text x="690.4" y="295.9" text-anchor="middle" textLength="63" lengthAdjust="spacing" fill="#000">redispatched</text></svg><div id="cshadow"></div><div id="listbtn"><svg width="28" height="23" viewBox="0 0 28 23"><g fill="#fff"><rect x="5" y="3.5" width="4" height="3.6"/><rect x="10.5" y="3.5" width="13.5" height="3.6"/><rect x="5" y="9" width="4" height="3.6"/><rect x="10.5" y="9" width="13.5" height="3.6"/><rect x="5" y="14.5" width="4" height="3.6"/><rect x="10.5" y="14.5" width="13.5" height="3.6"/></g></svg></div></div>
<div id="fs"></div><div id="legend">Event <span style="letter-spacing:0.031px">properties</span></div>
<div class="plabel" style="top:210px">Code</div><div class="pval" style="top:210px"><span style="letter-spacing:0.178px">ev_dispatch</span></div>
<div class="plabel" style="top:236px"><span style="letter-spacing:0.219px">Type</span></div>
<div id="sel"><span style="letter-spacing:0.108px">End-User </span><span style="letter-spacing:0.107px">Action</span><svg class="abs" width="8" height="14" style="left:104px;top:4px"><path d="M0.8 3.8 L3.25 1 L5.7 3.8 Z M0.8 10 L3.25 12.8 L5.7 10 Z" fill="#555"/></svg></div>
<div class="plabel" style="top:265px"><span style="letter-spacing:-0.069px">Label</span></div>
<div id="inp"><span style="letter-spacing:0.108px">Dispatch </span><span style="letter-spacing:-0.115px">to </span><span style="letter-spacing:-0.008px">a </span><span style="letter-spacing:0.078px">team</span><svg class="abs" width="16" height="10.5" style="left:236.8px;top:2.3px" viewBox="0 0 16 11" preserveAspectRatio="none"><rect width="16" height="11" fill="#fff"/><g fill="#d9534f"><rect y="0" width="16" height="1.2"/><rect y="2.4" width="16" height="1.2"/><rect y="4.9" width="16" height="1.2"/><rect y="7.3" width="16" height="1.2"/><rect y="9.8" width="16" height="1.2"/></g><rect width="8" height="6" fill="#3c5a9a"/><g fill="#fff"><rect x="1" y="1" width="1" height="1"/><rect x="3" y="1" width="1" height="1"/><rect x="5" y="1" width="1" height="1"/><rect x="2" y="2.5" width="1" height="1"/><rect x="4" y="2.5" width="1" height="1"/><rect x="6" y="2.5" width="1" height="1"/><rect x="1" y="4" width="1" height="1"/><rect x="3" y="4" width="1" height="1"/><rect x="5" y="4" width="1" height="1"/></g></svg></div>
<div class="ltitle" style="left:210px"><span style="letter-spacing:0.142px">Stopwatches</span></div><svg class="abs" width="10" height="10" style="left:295.5px;top:610.5px"><path d="M3.4 0.5 H6.6 V3.4 H9.5 V6.6 H6.6 V9.5 H3.4 V6.6 H0.5 V3.4 H3.4 Z" fill="#fff"/></svg><svg class="abs" width="10" height="10" style="left:318.5px;top:610.5px"><path d="M1.5 1.5 L8.5 8.5 M8.5 1.5 L1.5 8.5" stroke="#888" stroke-width="2.2" fill="none"/></svg>
<div class="ltitle" style="left:521px"><span style="letter-spacing:0.208px">Events</span></div><svg class="abs" width="10" height="10" style="left:571.5px;top:610.5px"><path d="M3.4 0.5 H6.6 V3.4 H9.5 V6.6 H6.6 V9.5 H3.4 V6.6 H0.5 V3.4 H3.4 Z" fill="#fff"/></svg><svg class="abs" width="10" height="10" style="left:594.5px;top:610.5px"><path d="M1.5 1.5 L8.5 8.5 M8.5 1.5 L1.5 8.5" stroke="#fff" stroke-width="2.2" fill="none"/></svg>
<div class="ltitle" style="left:831px"><span style="letter-spacing:0.080px">Highlight </span><span style="letter-spacing:0.094px">Scale</span></div><svg class="abs" width="10" height="10" style="left:928.5px;top:610.5px"><path d="M3.4 0.5 H6.6 V3.4 H9.5 V6.6 H6.6 V9.5 H3.4 V6.6 H0.5 V3.4 H3.4 Z" fill="#fff"/></svg><svg class="abs" width="10" height="10" style="left:951.5px;top:610.5px"><path d="M1.5 1.5 L8.5 8.5 M8.5 1.5 L1.5 8.5" stroke="#888" stroke-width="2.2" fill="none"/></svg>
<div class="lrow" style="left:210px;top:632px;width:310px"><svg width="12" height="14" viewBox="0 0 12 14" style="left:5.4px;top:4px"><g fill="none" stroke="#fff"><circle cx="5.9" cy="7.7" r="4.7" stroke-width="1.5"/><path d="M3.9 1.7 H7.9" stroke-width="1.5"/><path d="M9.4 2.5 L10.9 4" stroke-width="1.5"/><path d="M5.7 7.9 L7.4 6.2" stroke-width="1.1"/></g><g fill="#ddd"><rect x="5.5" y="4.3" width=".9" height=".9"/><rect x="5.5" y="10.2" width=".9" height=".9"/><rect x="2.5" y="7.3" width=".9" height=".9"/><rect x="8.5" y="7.3" width=".9" height=".9"/></g></svg><span style="left:23px"><span style="letter-spacing:0.177px">tto</span></span></div>
<div class="lrow" style="left:210px;top:654px;width:310px"><svg width="12" height="14" viewBox="0 0 12 14" style="left:5.4px;top:4px"><g fill="none" stroke="#fff"><circle cx="5.9" cy="7.7" r="4.7" stroke-width="1.5"/><path d="M3.9 1.7 H7.9" stroke-width="1.5"/><path d="M9.4 2.5 L10.9 4" stroke-width="1.5"/><path d="M5.7 7.9 L7.4 6.2" stroke-width="1.1"/></g><g fill="#ddd"><rect x="5.5" y="4.3" width=".9" height=".9"/><rect x="5.5" y="10.2" width=".9" height=".9"/><rect x="2.5" y="7.3" width=".9" height=".9"/><rect x="8.5" y="7.3" width=".9" height=".9"/></g></svg><span style="left:23px"><span style="letter-spacing:0.146px">ttr</span></span></div>
<div class="lrow" style="left:521px;top:632.0px;width:310px"><svg width="12" height="15" viewBox="0 0 12 15" style="left:4px;top:3px"><g fill="#fff"><circle cx="5.9" cy="3.7" r="2.75"/><path d="M0.1 14 C0.1 9.6 2.2 7.3 5.9 7.3 C9.7 7.3 11.8 9.6 11.8 14 L9.6 14.1 L9.4 14.8 L2.5 14.8 L2.3 14.1 Z"/></g><path d="M2.9 10.7 L2.7 14.2 M9 10.7 L9.2 14.2" stroke="#333" stroke-width=".8" fill="none"/></svg><span><span style="letter-spacing:0.050px">ev_assign</span></span></div>
<div class="lrow" style="left:521px;top:654.0px;width:310px"><svg width="12" height="15" viewBox="0 0 12 15" style="left:4px;top:3px"><path d="M6.1 2.1 H10.2 L7.6 6.4 H9.9 L2.2 13.9 L5.2 8.4 H1.6 Z" fill="#fff"/></svg><span><span style="letter-spacing:0.031px">ev_autoclose</span></span></div>
<div class="lrow" style="left:521px;top:676.0px;width:310px"><svg width="12" height="15" viewBox="0 0 12 15" style="left:4px;top:3px"><path d="M6.1 2.1 H10.2 L7.6 6.4 H9.9 L2.2 13.9 L5.2 8.4 H1.6 Z" fill="#fff"/></svg><span><span style="letter-spacing:-0.012px">ev_autoresolve</span></span></div>
<div class="lrow" style="left:521px;top:698.0px;width:310px"><svg width="12" height="15" viewBox="0 0 12 15" style="left:4px;top:3px"><g fill="#fff"><circle cx="5.9" cy="3.7" r="2.75"/><path d="M0.1 14 C0.1 9.6 2.2 7.3 5.9 7.3 C9.7 7.3 11.8 9.6 11.8 14 L9.6 14.1 L9.4 14.8 L2.5 14.8 L2.3 14.1 Z"/></g><path d="M2.9 10.7 L2.7 14.2 M9 10.7 L9.2 14.2" stroke="#333" stroke-width=".8" fill="none"/></svg><span><span style="letter-spacing:0.086px">ev_close</span></span></div>
<div class="lrow on" style="left:521px;top:719.0px;width:310px"><svg width="12" height="15" viewBox="0 0 12 15" style="left:4px;top:3px"><g fill="#fff"><circle cx="5.9" cy="3.7" r="2.75"/><path d="M0.1 14 C0.1 9.6 2.2 7.3 5.9 7.3 C9.7 7.3 11.8 9.6 11.8 14 L9.6 14.1 L9.4 14.8 L2.5 14.8 L2.3 14.1 Z"/></g><path d="M2.9 10.7 L2.7 14.2 M9 10.7 L9.2 14.2" stroke="#0079a8" stroke-width=".8" fill="none"/></svg><span><span style="letter-spacing:0.055px">ev_dispatch</span></span></div>
<div class="lrow" style="left:521px;top:741.0px;width:310px"><svg width="12" height="15" viewBox="0 0 12 15" style="left:4px;top:3px"><g fill="#fff"><circle cx="5.9" cy="3.7" r="2.75"/><path d="M0.1 14 C0.1 9.6 2.2 7.3 5.9 7.3 C9.7 7.3 11.8 9.6 11.8 14 L9.6 14.1 L9.4 14.8 L2.5 14.8 L2.3 14.1 Z"/></g><path d="M2.9 10.7 L2.7 14.2 M9 10.7 L9.2 14.2" stroke="#333" stroke-width=".8" fill="none"/></svg><span><span style="letter-spacing:-0.123px">ev_pending</span></span></div>
<div class="lrow" style="left:521px;top:763.0px;width:310px"><svg width="12" height="15" viewBox="0 0 12 15" style="left:4px;top:3px"><g fill="#fff"><circle cx="5.9" cy="3.7" r="2.75"/><path d="M0.1 14 C0.1 9.6 2.2 7.3 5.9 7.3 C9.7 7.3 11.8 9.6 11.8 14 L9.6 14.1 L9.4 14.8 L2.5 14.8 L2.3 14.1 Z"/></g><path d="M2.9 10.7 L2.7 14.2 M9 10.7 L9.2 14.2" stroke="#333" stroke-width=".8" fill="none"/></svg><span><span style="letter-spacing:-0.010px">ev_reassign</span></span></div>
<div class="lrow" style="left:521px;top:785.0px;width:310px"><svg width="12" height="15" viewBox="0 0 12 15" style="left:4px;top:3px"><g fill="#fff"><circle cx="5.9" cy="3.7" r="2.75"/><path d="M0.1 14 C0.1 9.6 2.2 7.3 5.9 7.3 C9.7 7.3 11.8 9.6 11.8 14 L9.6 14.1 L9.4 14.8 L2.5 14.8 L2.3 14.1 Z"/></g><path d="M2.9 10.7 L2.7 14.2 M9 10.7 L9.2 14.2" stroke="#333" stroke-width=".8" fill="none"/></svg><span><span style="letter-spacing:-0.161px">ev_reopen</span></span></div>
<div class="lrow" style="left:521px;top:806.0px;width:310px"><svg width="12" height="15" viewBox="0 0 12 15" style="left:4px;top:3px"><g fill="#fff"><circle cx="5.9" cy="3.7" r="2.75"/><path d="M0.1 14 C0.1 9.6 2.2 7.3 5.9 7.3 C9.7 7.3 11.8 9.6 11.8 14 L9.6 14.1 L9.4 14.8 L2.5 14.8 L2.3 14.1 Z"/></g><path d="M2.9 10.7 L2.7 14.2 M9 10.7 L9.2 14.2" stroke="#333" stroke-width=".8" fill="none"/></svg><span><span style="letter-spacing:0.013px">ev_resolve</span></span></div>
<div class="lrow" style="left:521px;top:828.0px;width:310px"><svg width="12" height="15" viewBox="0 0 12 15" style="left:4px;top:3px"><path d="M6.1 2.1 H10.2 L7.6 6.4 H9.9 L2.2 13.9 L5.2 8.4 H1.6 Z" fill="#fff"/></svg><span><span style="letter-spacing:0.041px">ev_timeout</span></span></div>
<div class="hrow" style="left:868px;top:639px"><span style="letter-spacing:0.281px">warning</span></div><div class="hrow" style="left:933px;top:639px"><span style="letter-spacing:0.161px">Orange</span></div><svg class="abs" width="30" height="24" style="left:832px;top:636px" viewBox="832 636 30 24"><defs><radialGradient id="rg" cx="38%" cy="28%" r="80%"><stop offset="0" stop-color="#ff6a5e"/><stop offset=".45" stop-color="#e01818"/><stop offset="1" stop-color="#9c0a0a"/></radialGradient><radialGradient id="gg" cx="38%" cy="28%" r="80%"><stop offset="0" stop-color="#c4c4c4"/><stop offset=".5" stop-color="#8f8f8f"/><stop offset="1" stop-color="#666"/></radialGradient><linearGradient id="bg" x1="0" y1="0" x2="0" y2="1"><stop offset="0" stop-color="#ffd24a"/><stop offset="1" stop-color="#e8960c"/></linearGradient><linearGradient id="cg" x1="0" y1="0" x2="0" y2="1"><stop offset="0" stop-color="#f4f4f4"/><stop offset="1" stop-color="#9a9a9a"/></linearGradient><radialGradient id="fg" cx="50%" cy="75%" r="70%"><stop offset="0" stop-color="#ffe94a"/><stop offset=".6" stop-color="#ffae12"/><stop offset="1" stop-color="#f06a00"/></radialGradient></defs><circle cx="844.1" cy="648.1" r="7.5" fill="url(#rg)"/><path d="M842.80 643.20H845.40L845.00 649.60H843.20Z" fill="#fff"/><rect x="842.90" y="650.60" width="2.4" height="2.4" rx=".5" fill="#fff"/><path d="M851.3 640.7C853.3 640.7 853.9 643 854.1 645C854.3 646.6 854.8 647.6 855.4 648.4H847.2C847.8 647.6 848.3 646.6 848.5 645C848.7 643 849.3 640.7 851.3 640.7Z" fill="url(#bg)"/><circle cx="851.3" cy="648.9" r=".9" fill="#e8960c"/></svg>
<div class="hrow" style="left:868px;top:668px"><span style="letter-spacing:0.123px">critical</span></div><div class="hrow" style="left:933px;top:668px"><span style="letter-spacing:0.328px">Red</span></div><svg class="abs" width="30" height="26" style="left:832px;top:660px" viewBox="832 660 30 26"><path d="M838 677.5C835.4 677.5 834 675.2 834 672.6C834 670.1 835.3 668.8 836.9 668.6C837 666.4 838.7 664.9 840.7 664.9C841.5 664.9 842.2 665.1 842.8 665.5C843.6 663.9 845.2 662.9 847 662.9C849.6 662.9 851.6 664.8 851.9 667.2C852.3 667.1 852.7 667 853.2 667C855.3 667 857 668.7 857 670.9C857 673.4 855.1 677.5 852.6 677.5Z" fill="url(#cg)" stroke="#8a8a8a" stroke-width=".5"/><circle cx="845.3" cy="677.3" r="7.4" fill="url(#rg)"/><path d="M844.00 672.40H846.60L846.20 678.80H844.40Z" fill="#fff"/><rect x="844.10" y="679.80" width="2.4" height="2.4" rx=".5" fill="#fff"/><path d="M851.2 668.3C851.8 670 853.6 670.6 854.6 672.2C855.8 674.2 855 677.8 851.4 677.8C848 677.8 847 674.8 848.2 672.6C848.6 673.4 849.2 673.8 849.8 673.8C849.4 671.6 850.2 669.4 851.2 668.3Z" fill="url(#fg)"/></svg>
<div class="hrow" style="left:868px;top:697px"><span style="letter-spacing:0.219px">closed</span></div><div class="hrow" style="left:933px;top:697px"><span style="letter-spacing:0.328px">None</span></div><svg class="abs" width="30" height="24" style="left:832px;top:694px" viewBox="832 694 30 24"><circle cx="845.3" cy="706.3" r="7.5" fill="url(#gg)"/><path d="M844.00 701.40H846.60L846.20 707.80H844.40Z" fill="#fff"/><rect x="844.10" y="708.80" width="2.4" height="2.4" rx=".5" fill="#fff"/></svg>
<svg class="abs" width="16" height="22" style="left:688px;top:728px" viewBox="688 728 16 22"><path d="M689.6 730.4V745.6L693.2 742.4L695.7 747.6L697.9 746.6L695.5 741.5H700.3Z" fill="#fff" stroke="#000" stroke-width="1.1" stroke-linejoin="round"/></svg>
<div class="abs" style="left:0;top:846px;width:1564px;height:1px;background:#555"></div></body>
</html>
